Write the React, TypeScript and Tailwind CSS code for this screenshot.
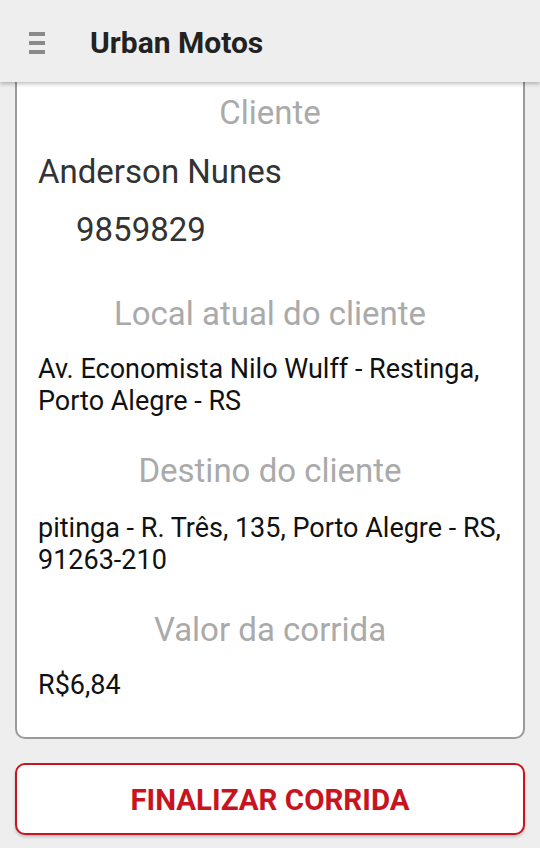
const Label = ({ children }: { children: React.ReactNode }) => (
  <p className="text-center text-[33px] leading-[38px] text-[#aaaaaa]">{children}</p>
);

export default function App() {
  return (
    <div
      className="flex h-[848px] w-[540px] flex-col overflow-hidden bg-[#eeeeee]"
      style={{ fontFamily: "Roboto, 'Noto Sans', sans-serif" }}
    >
      <header className="relative z-10 flex h-[82px] shrink-0 items-center bg-[#eeeeee] pt-[3px] shadow-[0_2px_4px_rgba(0,0,0,0.25)]">
        <div className="ml-[29px] flex w-[16px] flex-col gap-[5px]">
          <span className="h-[4px] w-full bg-[#8a8a8a]" />
          <span className="h-[4px] w-full bg-[#8a8a8a]" />
          <span className="h-[4px] w-full bg-[#8a8a8a]" />
        </div>
        <h1 className="ml-[45px] text-[30px] font-bold text-[#222222]">Urban Motos</h1>
      </header>

      <main className="flex flex-col px-[15px]">
        <section className="-mt-[4px] rounded-b-[10px] border-2 border-t-0 border-[#9a9a9a] bg-white px-[21px] pt-[16px] pb-[36px] text-[#333333]">
          <Label>Cliente</Label>
          <p className="mt-[21px] text-[33px] leading-[38px]">Anderson Nunes</p>
          <p className="mt-[20px] pl-[38px] text-[33px] leading-[38px]">9859829</p>

          <div className="mt-[46px]">
            <Label>Local atual do cliente</Label>
          </div>
          <p className="mt-[20px] text-[27px] leading-[32px] text-[#111111]">
            Av. Economista Nilo Wulff - Restinga, Porto Alegre - RS
          </p>

          <div className="mt-[35px]">
            <Label>Destino do cliente</Label>
          </div>
          <p className="mt-[22px] text-[27px] leading-[32px] text-[#111111]">
            pitinga - R. Três, 135, Porto Alegre - RS, 91263-210
          </p>

          <div className="mt-[35px]">
            <Label>Valor da corrida</Label>
          </div>
          <p className="mt-[20px] text-[27px] leading-[32px] text-[#111111]">R$6,84</p>
        </section>

        <button className="mt-[24px] flex h-[72px] items-center justify-center rounded-[10px] border-2 border-[#c8141e] bg-white pt-[3px] text-[29.5px] font-bold text-[#c8141e] shadow-[0_2px_3px_rgba(0,0,0,0.2)]">
          FINALIZAR CORRIDA
        </button>
      </main>
    </div>
  );
}
